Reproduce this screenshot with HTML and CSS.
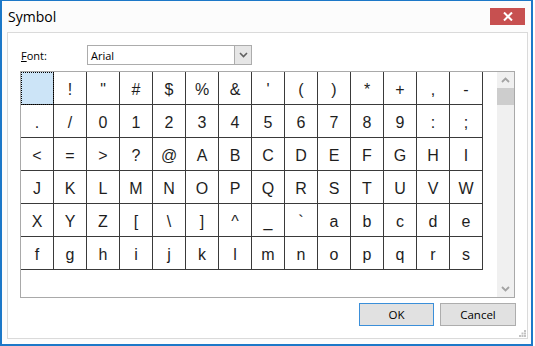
FILE: index.html
```html
<!DOCTYPE html>
<html lang="en">
<head>
    <meta charset="UTF-8">
    <title>Symbol</title>
    <link rel="stylesheet" href="styles.css">
</head>
<body>
    <div class="window">
        <div class="titlebar">
            <span class="title">Symbol</span>
            <div class="close-btn">
                <svg width="10" height="9" viewBox="0 0 10 9"><path d="M1 0.5 L9 8.5 M9 0.5 L1 8.5" stroke="#fff" stroke-width="2"/></svg>
            </div>
        </div>
        <div class="panel">
            <div class="font-row">
                <label class="font-label"><u>F</u>ont:</label>
                <div class="dropdown">
                    <span class="dropdown-text">Arial</span>
                    <div class="dropdown-btn">
                        <svg width="9" height="6" viewBox="0 0 9 6"><path d="M1 1 L4.5 4.5 L8 1" fill="none" stroke="#606060" stroke-width="1.6"/></svg>
                    </div>
                </div>
            </div>

            <div class="chars-box">
                <div class="char-grid">
                    <div class="cell selected"></div><div class="cell">!</div><div class="cell">&quot;</div><div class="cell">#</div><div class="cell">$</div><div class="cell">%</div><div class="cell">&amp;</div><div class="cell">'</div><div class="cell">(</div><div class="cell">)</div><div class="cell">*</div><div class="cell">+</div><div class="cell">,</div><div class="cell">-</div>
                    <div class="cell">.</div><div class="cell">/</div><div class="cell">0</div><div class="cell">1</div><div class="cell">2</div><div class="cell">3</div><div class="cell">4</div><div class="cell">5</div><div class="cell">6</div><div class="cell">7</div><div class="cell">8</div><div class="cell">9</div><div class="cell">:</div><div class="cell">;</div>
                    <div class="cell">&lt;</div><div class="cell">=</div><div class="cell">&gt;</div><div class="cell">?</div><div class="cell">@</div><div class="cell">A</div><div class="cell">B</div><div class="cell">C</div><div class="cell">D</div><div class="cell">E</div><div class="cell">F</div><div class="cell">G</div><div class="cell">H</div><div class="cell">I</div>
                    <div class="cell">J</div><div class="cell">K</div><div class="cell">L</div><div class="cell">M</div><div class="cell">N</div><div class="cell">O</div><div class="cell">P</div><div class="cell">Q</div><div class="cell">R</div><div class="cell">S</div><div class="cell">T</div><div class="cell">U</div><div class="cell">V</div><div class="cell">W</div>
                    <div class="cell">X</div><div class="cell">Y</div><div class="cell">Z</div><div class="cell">[</div><div class="cell">\</div><div class="cell">]</div><div class="cell">^</div><div class="cell">_</div><div class="cell">`</div><div class="cell">a</div><div class="cell">b</div><div class="cell">c</div><div class="cell">d</div><div class="cell">e</div>
                    <div class="cell">f</div><div class="cell">g</div><div class="cell">h</div><div class="cell">i</div><div class="cell">j</div><div class="cell">k</div><div class="cell">l</div><div class="cell">m</div><div class="cell">n</div><div class="cell">o</div><div class="cell">p</div><div class="cell">q</div><div class="cell">r</div><div class="cell">s</div>
                </div>
                <div class="scrollbar">
                    <div class="scroll-arrow">
                        <svg width="9" height="6" viewBox="0 0 9 6"><path d="M1 5 L4.5 1.5 L8 5" fill="none" stroke="#a3a3a3" stroke-width="1.8"/></svg>
                    </div>
                    <div class="scroll-thumb"></div>
                    <div class="scroll-track"></div>
                    <div class="scroll-arrow">
                        <svg width="9" height="6" viewBox="0 0 9 6"><path d="M1 1 L4.5 4.5 L8 1" fill="none" stroke="#a3a3a3" stroke-width="1.8"/></svg>
                    </div>
                </div>
            </div>

            <div class="button-row">
                <button class="btn btn-default">OK</button>
                <button class="btn">Cancel</button>
            </div>

            <svg class="grip" width="7" height="7" viewBox="0 0 7 7">
                <rect x="5" y="0" width="2" height="2" fill="#c2c2c2"/>
                <rect x="2.5" y="2.5" width="2" height="2" fill="#c2c2c2"/>
                <rect x="5" y="2.5" width="2" height="2" fill="#c2c2c2"/>
                <rect x="0" y="5" width="2" height="2" fill="#c2c2c2"/>
                <rect x="2.5" y="5" width="2" height="2" fill="#c2c2c2"/>
                <rect x="5" y="5" width="2" height="2" fill="#c2c2c2"/>
            </svg>
        </div>
    </div>
</body>
</html>
```

FILE: styles.css
```css
body {
    margin: 0;
    background: #fff;
    font-family: "Open Sans", "Noto Sans", sans-serif;
}
.window {
    width: 533px;
    height: 346px;
    box-sizing: border-box;
    border: 2px solid #1c78c8;
    border-top-width: 1px;
    background: #fcfcfc;
    display: flex;
    flex-direction: column;
}
.titlebar {
    height: 31px;
    display: flex;
    align-items: flex-start;
    justify-content: space-between;
    padding-left: 6px;
}
.title {
    font-size: 14px;
    line-height: 14px;
    margin-top: 9px;
    color: #000;
}
.close-btn {
    width: 35px;
    height: 17px;
    margin-top: 7px;
    margin-right: 6px;
    background: #c75050;
    display: flex;
    align-items: center;
    justify-content: center;
}
.panel {
    flex: 1;
    margin: 0 3px 5px 5px;
    border: 1px solid #dadada;
    background: #fff;
    padding: 12px 0 0 12px;
    position: relative;
}
.font-row {
    display: flex;
    align-items: center;
    height: 20px;
}
.font-label {
    width: 67px;
    padding-left: 1px;
    box-sizing: border-box;
    font-size: 11px;
    color: #000;
}
.dropdown {
    width: 165px;
    height: 20px;
    box-sizing: border-box;
    border: 1px solid #acacac;
    display: flex;
    align-items: center;
    justify-content: space-between;
}
.dropdown-text {
    font-size: 11px;
    padding-left: 3px;
    color: #000;
}
.dropdown-btn {
    width: 16px;
    height: 18px;
    border-left: 1px solid #acacac;
    background: #e6e6e6;
    display: flex;
    align-items: center;
    justify-content: center;
}
.chars-box {
    margin-top: 6px;
    width: 495px;
    height: 227px;
    box-sizing: border-box;
    border: 1px solid #a9a9a9;
    display: flex;
    justify-content: space-between;
}
.char-grid {
    display: grid;
    grid-template-columns: repeat(14, 33px);
    grid-auto-rows: 33px;
    align-content: start;
}
.cell {
    border-right: 1px solid #3a3a3a;
    border-bottom: 1px solid #3a3a3a;
    font-family: "Liberation Sans", Arial, sans-serif;
    font-size: 16px;
    line-height: 35px;
    text-align: center;
    color: #1e1e1e;
}
.cell.selected {
    background: #cce4f7;
    outline: 1px dotted #000;
    outline-offset: -1px;
}
.scrollbar {
    width: 17px;
    background: #f0f0f0;
    display: flex;
    flex-direction: column;
}
.scroll-arrow {
    height: 16px;
    display: flex;
    align-items: center;
    justify-content: center;
}
.scroll-thumb {
    height: 17px;
    background: #cdcdcd;
}
.scroll-track {
    flex: 1;
}
.button-row {
    width: 496px;
    margin-top: 5px;
    display: flex;
    justify-content: flex-end;
    gap: 6px;
}
.btn {
    width: 75px;
    height: 23px;
    border: 1px solid #adadad;
    background: #e1e1e1;
    font-family: "Open Sans", "Noto Sans", sans-serif;
    font-size: 11.5px;
    color: #000;
    padding: 0;
}
.btn:last-child {
    width: 76px;
}
.btn-default {
    border-color: #3b8fd9;
}
.grip {
    position: absolute;
    right: 1px;
    bottom: 1px;
}
```
